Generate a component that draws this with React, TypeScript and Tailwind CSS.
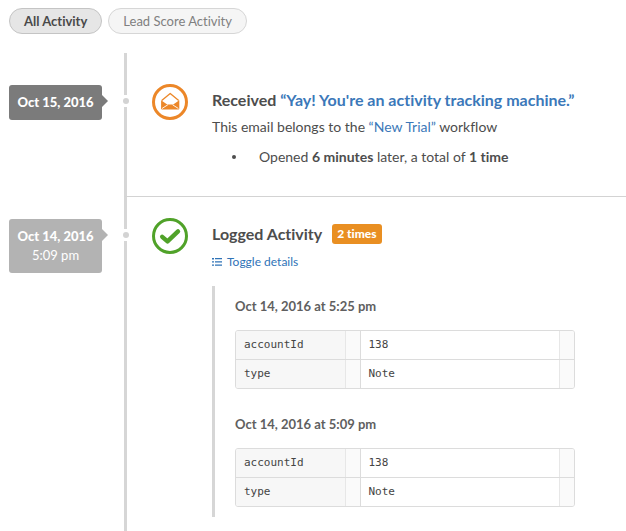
import { FC, ReactNode, useState } from 'react';

interface Detail {
    date: string;
    fields: Record<string, string>;
}

const details: Detail[] = [
    { date: 'Oct 14, 2016 at 5:25 pm', fields: { accountId: '138', type: 'Note' } },
    { date: 'Oct 14, 2016 at 5:09 pm', fields: { accountId: '138', type: 'Note' } },
];

const EmailIcon = () => (
    <svg viewBox="0 0 36 36" className="size-9 shrink-0" aria-hidden="true">
        <circle cx="18" cy="18" r="16.5" fill="none" stroke="#ec8728" strokeWidth="3" />
        {/* Raised flap */}
        <path d="M9.7 16.6L18.2 9.5L26.7 16.6" fill="none" stroke="#ec8728" strokeWidth="1.3" strokeLinejoin="round" />
        {/* Body with its two folds */}
        <path d="M9.1 16.3L15.2 20.6H21.2L27.3 16.3V24.4Q27.3 25.4 26.3 25.4H10.1Q9.1 25.4 9.1 24.4Z" fill="#ec8728" />
        <path d="M10 24.5L15.8 20.8M26.4 24.5L20.6 20.8" fill="none" stroke="#fff" strokeWidth="0.9" />
    </svg>
);

const CheckIcon = () => (
    <svg viewBox="0 0 36 36" className="size-9 shrink-0" aria-hidden="true">
        <circle cx="18" cy="18" r="16.5" fill="none" stroke="#50a229" strokeWidth="3" />
        <path d="M10.2 18.8L15.5 23.4L26 13.4" fill="none" stroke="#50a229" strokeWidth="4.4" strokeLinecap="round" strokeLinejoin="round" />
    </svg>
);

const ListIcon = () => (
    <svg viewBox="0 0 10 8" className="h-2 w-[10px]" fill="currentColor" aria-hidden="true">
        <path d="M0 0h2v1.4H0zM3 0h7v1.2H3zM0 3.2h2v1.4H0zM3 3.3h7v1.2H3zM0 6.4h2v1.4H0zM3 6.5h7v1.2H3z" />
    </svg>
);

interface EntryProps {
    date: string;
    time?: string;
    icon: ReactNode;
    children: ReactNode;
    first?: boolean;
}

const Entry: FC<EntryProps> = ({ date, time, icon, children, first }) => (
    <li className={`flex ${first ? '' : 'grow'}`}>
        {/* Date tag, pointing at the rail */}
        <div className={`w-31 shrink-0 pl-[9px] ${first ? 'pt-8' : 'pt-[22px]'}`}>
            <div className={`relative w-[93px] rounded-[3px] py-2 text-center text-[13px] leading-[19px] text-white ${first ? 'bg-[#7b7b7b]' : 'bg-[#b3b3b3]'}`}>
                <time className="block font-black">{date}</time>
                {time && <time className="block">{time}</time>}
                <svg viewBox="0 0 6 12" className={`absolute top-[10px] left-full h-3 w-[6px] ${first ? 'fill-[#7b7b7b]' : 'fill-[#b3b3b3]'}`} aria-hidden="true">
                    <path d="M0 0L6 6L0 12Z" />
                </svg>
            </div>
        </div>
        <div className={`relative flex min-w-0 grow gap-6 border-l-3 border-l-[#d6d6d6] pl-[25px] ${first ? 'border-b border-b-[#d3d3d3] pt-[31px] pb-7' : 'pt-[21px] pb-[14px]'}`}>
            <span className={`absolute -left-[6px] flex h-3 w-[9px] items-center justify-center bg-white ${first ? 'top-[42px]' : 'top-8'}`}>
                <span className="size-[6px] shrink-0 rounded-full bg-[#d3d3d3]" />
            </span>
            {icon}
            <div className="min-w-0 grow">{children}</div>
        </div>
    </li>
);

const FieldTable: FC<{ fields: Record<string, string> }> = ({ fields }) => (
    <div className="max-w-[340px] overflow-hidden rounded-[3px] border border-[#dcdcdc]">
        <table className="w-full table-fixed border-collapse font-['DejaVu_Sans_Mono',monospace] text-[11px] leading-7 text-[#444]">
            <tbody>
                {Object.entries(fields).map(([name, value]) => (
                    <tr key={name} className="border-b border-[#dcdcdc] last:border-b-0">
                        <th scope="row" className="w-31 border-r border-[#dcdcdc] bg-[#f7f7f7] p-0 text-left font-normal">
                            <div className="flex justify-between pl-2">
                                {name}
                                <span className="w-[15px] border-l border-[#e7e7e7] bg-[#fafafa]" />
                            </div>
                        </th>
                        <td className="p-0">
                            <div className="flex justify-between pl-2">
                                {value}
                                <span className="w-[15px] border-l border-[#e7e7e7] bg-[#fafafa]" />
                            </div>
                        </td>
                    </tr>
                ))}
            </tbody>
        </table>
    </div>
);

const App = () => {
    const [tab, setTab] = useState('all');
    const [open, setOpen] = useState(true);

    const active = 'border-[#c4c4c4] bg-[#e6e6e6] font-bold text-[#4a4a4a]';
    const inactive = 'border-[#d6d6d6] bg-[#f5f5f5] text-[#808080]';

    return (
        <main className="flex min-h-screen flex-col bg-white font-[Lato,sans-serif] text-[#4d4d4d] [font-variant-ligatures:none]">
            <nav className="flex gap-[6px] px-[9px] pt-2 pb-[19px] text-[13px] leading-6">
                <button type="button" onClick={() => setTab('all')} className={`rounded-full border px-[14px] ${tab === 'all' ? active : inactive}`}>
                    All Activity
                </button>
                <button type="button" onClick={() => setTab('score')} className={`rounded-full border px-[14px] ${tab === 'score' ? active : inactive}`}>
                    Lead Score Activity
                </button>
            </nav>

            <ol className="flex grow flex-col">
                <Entry first date="Oct 15, 2016" icon={<EmailIcon />}>
                    <h2 className="pt-1 text-[16px] leading-6 font-bold">
                        Received <a href="#email" className="text-[#3b78b9]">“Yay! You're an activity tracking machine.”</a>
                    </h2>
                    <p className="pt-[5px] text-[14px] leading-5">
                        This email belongs to the <a href="#workflow" className="text-[#3b78b9]">“New Trial”</a> workflow
                    </p>
                    <ul className="pt-[9px] text-[14px] leading-[22px]">
                        <li className="flex items-center gap-[23px] pl-5">
                            <span className="size-1 rounded-full bg-[#4d4d4d]" />
                            <span>Opened <b>6 minutes</b> later, a total of <b>1 time</b></span>
                        </li>
                    </ul>
                </Entry>

                <Entry date="Oct 14, 2016" time="5:09 pm" icon={<CheckIcon />}>
                    <div className="flex items-center gap-[10px] pt-1">
                        <h2 className="text-[16px] leading-6 font-bold">Logged Activity</h2>
                        <span className="rounded-[3px] bg-[#e98f22] px-[5px] text-[12px] leading-5 font-black text-white">2 times</span>
                    </div>
                    <button type="button" onClick={() => setOpen((s) => !s)} className="mt-[6px] flex items-center gap-[5px] text-[12px] leading-5 text-[#2f73b7]">
                        <ListIcon />
                        Toggle details
                    </button>
                    {open && (
                        <div className="mt-[14px] flex flex-col gap-[23px] border-l-3 border-[#d6d6d6] pt-2 pb-[10px] pl-5">
                            {details.map((detail) => (
                                <section key={detail.date}>
                                    <h3 className="pt-[2px] pb-[14px] text-[13px] leading-5 font-bold text-[#606060]">{detail.date}</h3>
                                    <FieldTable fields={detail.fields} />
                                </section>
                            ))}
                        </div>
                    )}
                </Entry>
            </ol>
        </main>
    );
};

export default App;
